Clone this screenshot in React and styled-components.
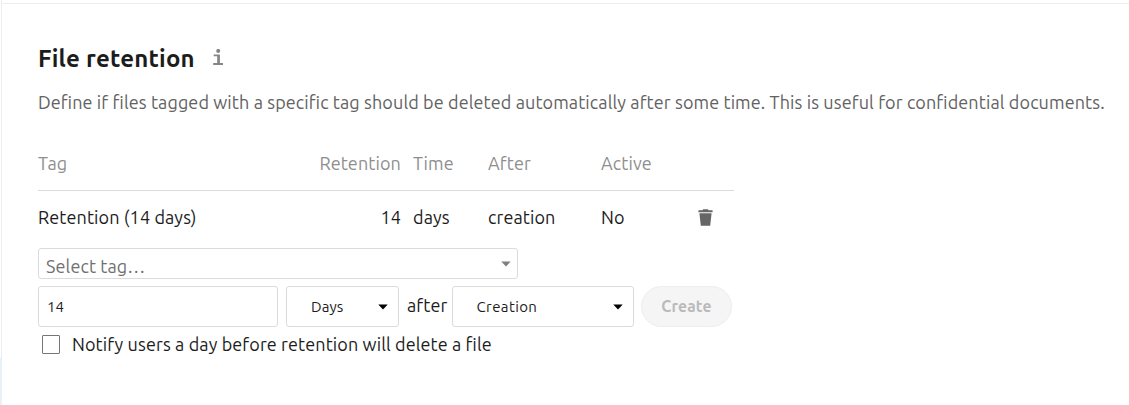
import React from 'react';
import styled, { createGlobalStyle } from 'styled-components';

const GlobalStyle = createGlobalStyle`
  *, *::before, *::after { box-sizing: border-box; }
  body {
    margin: 0;
    background: #fff;
    color: #1c1c1c;
    font-family: Ubuntu, "Noto Sans", sans-serif;
    font-size: 18px;
    font-feature-settings: "liga" 1;
    overflow: hidden;
  }
`;

const Page = styled.div`
  display: flex;
  height: 405px;
`;

const Rail = styled.div`
  display: flex;
  flex-direction: column;
  width: 2px;
`;

const RailEdge = styled.div`
  height: 358px;
  border-right: 1px solid #ededed;
`;

const RailActive = styled.div`
  flex: 1;
  background: #e6f1f8;
`;

const Main = styled.main`
  flex: 1;
  margin-top: 3px;
  border-top: 1px solid #ededed;
  padding: 38px 0 0 36px;
`;

const Text = styled.span`
  white-space: nowrap;
  letter-spacing: ${p => p.$track ?? 0.11}px;
`;

const TitleRow = styled.div`
  display: flex;
  align-items: center;
  height: 32px;
`;

const Title = styled.h2`
  margin: 0;
  padding-top: 2px;
  width: 175px;
  font-size: 24px;
  font-weight: 700;
  line-height: 32px;
`;

const Hint = styled.p`
  margin: 14px 0 0;
  height: 29px;
  line-height: 28px;
  color: #626262;
`;

const Table = styled.div`
  width: 696px;
  margin-top: 19px;
`;

const Row = styled.div`
  display: grid;
  grid-template-columns: 263px 100px 75px 113px 97px 1fr;
  align-items: center;
  height: ${p => (p.$head ? 55 : 54)}px;
  padding-bottom: ${p => (p.$head ? 0 : 2)}px;
  color: ${p => (p.$head ? '#8e8e8e' : '#1c1c1c')};
  border-bottom: ${p => (p.$head ? '1px solid #dbdbdb' : '0')};
`;

const Cell = styled.div`
  line-height: 28px;
  text-align: ${p => (p.$right ? 'right' : 'left')};
  padding-left: ${p => p.$pad || 0}px;
`;

const TrashIcon = styled.svg`
  display: block;
  width: 15px;
  height: 17px;
  margin-top: 1px;
`;

const TagSelect = styled.div`
  display: flex;
  justify-content: space-between;
  align-items: center;
  width: 480px;
  height: 31px;
  margin-top: 3px;
  padding: 0 6px 0 7px;
  border: 1px solid #dbdbdb;
  border-radius: 3px;
  color: #707070;
  line-height: 29px;
`;

const Placeholder = styled(Text)`
  padding-top: 6px;
`;

const Controls = styled.div`
  display: flex;
  align-items: center;
  height: 41px;
  margin-top: 7px;
`;

const Field = styled.div`
  display: flex;
  align-items: center;
  justify-content: space-between;
  width: ${p => p.$width}px;
  height: 41px;
  margin-right: ${p => p.$gap || 0}px;
  padding: 0 10px 0 ${p => p.$inset}px;
  border: 1px solid #dbdbdb;
  border-radius: 3px;
  font-size: 15px;
`;

const After = styled.div`
  width: 53px;
  padding: 0 0 3px 8px;
  line-height: 28px;
`;

const CreateButton = styled.button`
  width: 91px;
  height: 41px;
  padding: 0 0 1px;
  border: 1px solid #ededed;
  border-radius: 21px;
  background: #f5f5f5;
  color: #bababa;
  font: 700 15.6px Ubuntu, "Noto Sans", sans-serif;
`;

const CheckRow = styled.label`
  display: flex;
  align-items: center;
  height: 28px;
  margin-top: 3px;
  padding-left: 4px;
`;

const Box = styled.span`
  width: 18px;
  height: 19px;
  margin-right: 12px;
  border: 1px solid #767676;
  border-radius: 1px;
`;

const InfoIcon = () => (
  <svg width="10" height="18" viewBox="0 0 10 18" fill="#858585">
    <circle cx="5.2" cy="1.9" r="2" />
    <path d="M0.7 5.4H6.9V14H10V16H0.2V14H4.2V7.3H0.7Z" />
  </svg>
);

const Caret = ({ color = '#000' }) => (
  <svg width="10" height="6" viewBox="0 0 10 6" fill={color}>
    <path d="M0.3 0.4H9.7L5 5.4Z" />
  </svg>
);

export default function App() {
  return (
    <>
      <GlobalStyle />
      <Page>
        <Rail>
          <RailEdge />
          <RailActive />
        </Rail>
        <Main>
          <TitleRow>
            <Title><Text $track={0.22}>File retention</Text></Title>
            <InfoIcon />
          </TitleRow>
          <Hint>
            <Text>Define if files tagged with a specific tag should be deleted automatically after some time. This is useful for confidential documents.</Text>
          </Hint>
          <Table>
            <Row $head>
              <Cell><Text>Tag</Text></Cell>
              <Cell $right><Text>Retention</Text></Cell>
              <Cell $pad={12}><Text>Time</Text></Cell>
              <Cell $pad={12}><Text>After</Text></Cell>
              <Cell $pad={12}><Text>Active</Text></Cell>
            </Row>
            <Row>
              <Cell><Text>Retention (14 days)</Text></Cell>
              <Cell $right><Text>14</Text></Cell>
              <Cell $pad={12}><Text>days</Text></Cell>
              <Cell $pad={12}><Text>creation</Text></Cell>
              <Cell $pad={12}><Text>No</Text></Cell>
              <Cell $pad={12}>
                <TrashIcon viewBox="0 0 15 17" fill="#666">
                  <path d="M5.2 0.2H9.8L10.6 1.2H14.6V3.2H0.4V1.2H4.4ZM1.4 4.2H13.6L12.2 16.8H2.8Z" />
                </TrashIcon>
              </Cell>
            </Row>
          </Table>
          <TagSelect>
            <Placeholder $track={0.11}>Select tag…</Placeholder>
            <Caret color="#808080" />
          </TagSelect>
          <Controls>
            <Field $width={240} $gap={8} $inset={8}><Text>14</Text></Field>
            <Field $width={113} $inset={24}><Text>Days</Text><Caret /></Field>
            <After><Text>after</Text></After>
            <Field $width={182} $gap={7} $inset={23.5}><Text $track={0.38}>Creation</Text><Caret /></Field>
            <CreateButton disabled><Text $track={0.2}>Create</Text></CreateButton>
          </Controls>
          <CheckRow>
            <Box />
            <Text>Notify users a day before retention will delete a file</Text>
          </CheckRow>
        </Main>
      </Page>
    </>
  );
}
